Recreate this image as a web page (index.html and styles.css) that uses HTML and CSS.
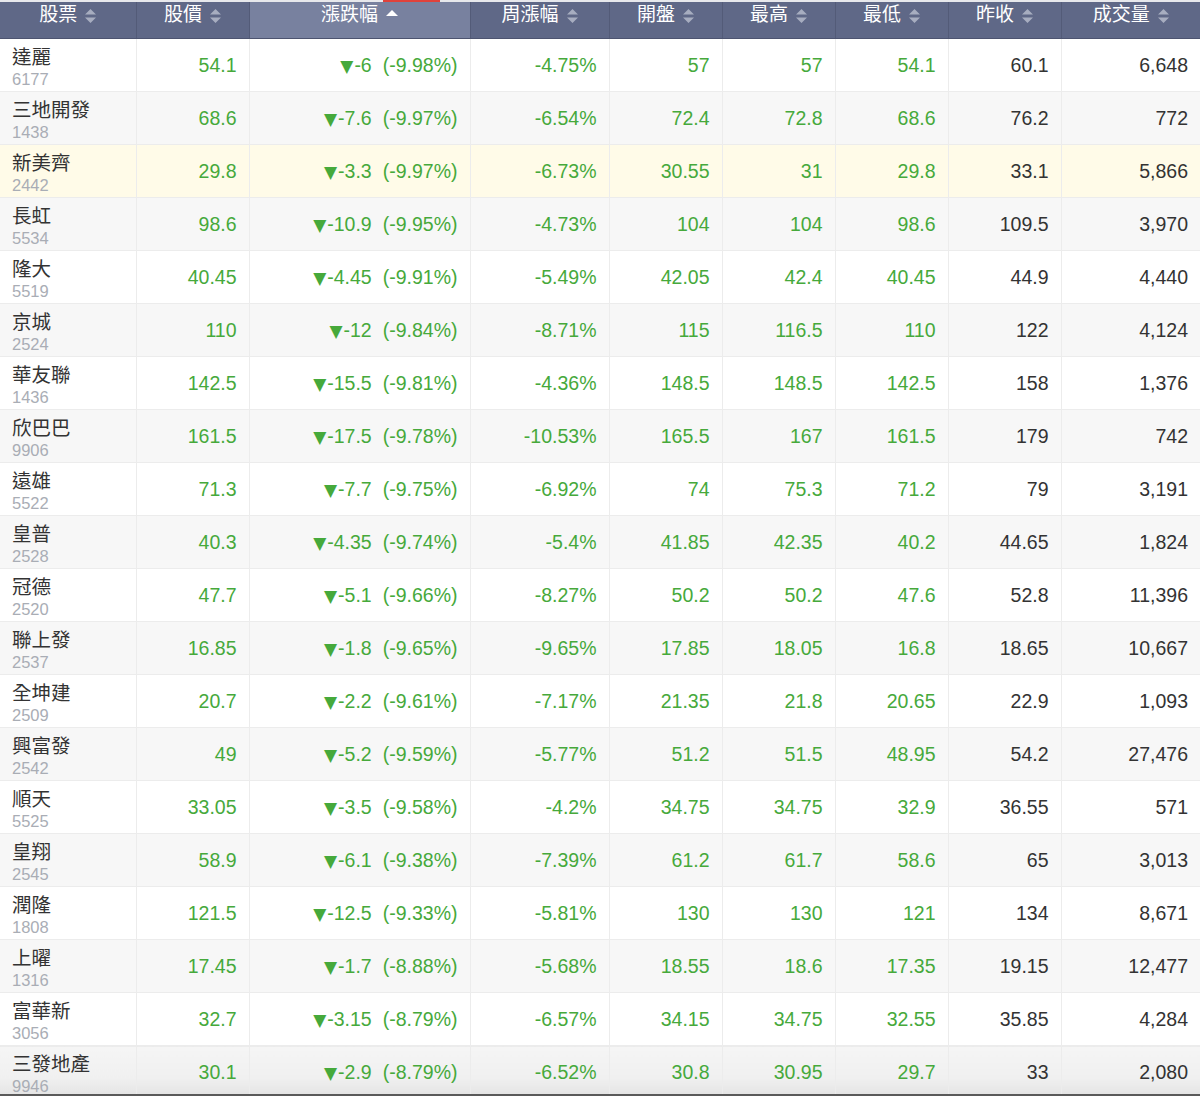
FILE: index.html
```html
<!DOCTYPE html>
<html lang="zh-Hant">
<head>
<meta charset="utf-8">
<title>股票</title>
<link rel="stylesheet" href="styles.css">
</head>
<body>
<div class="topstrip"><div class="tab"></div></div>
<table class="grid">
<colgroup>
<col class="c1"><col class="c2"><col class="c3"><col class="c4"><col class="c5"><col class="c6"><col class="c7"><col class="c8"><col class="c9">
</colgroup>
<thead>
<tr>
<th><span class="hd">股票<svg class="sort" viewBox="0 0 11 14"><path d="M5.5 0L11 5.5H0Z M0 8.5H11L5.5 14Z"/></svg></span></th>
<th><span class="hd">股價<svg class="sort" viewBox="0 0 11 14"><path d="M5.5 0L11 5.5H0Z M0 8.5H11L5.5 14Z"/></svg></span></th>
<th class="active"><span class="hd">漲跌幅<svg class="asc" viewBox="0 0 12 6"><path d="M6 0L12 6H0Z"/></svg></span></th>
<th><span class="hd">周漲幅<svg class="sort" viewBox="0 0 11 14"><path d="M5.5 0L11 5.5H0Z M0 8.5H11L5.5 14Z"/></svg></span></th>
<th><span class="hd">開盤<svg class="sort" viewBox="0 0 11 14"><path d="M5.5 0L11 5.5H0Z M0 8.5H11L5.5 14Z"/></svg></span></th>
<th><span class="hd">最高<svg class="sort" viewBox="0 0 11 14"><path d="M5.5 0L11 5.5H0Z M0 8.5H11L5.5 14Z"/></svg></span></th>
<th><span class="hd">最低<svg class="sort" viewBox="0 0 11 14"><path d="M5.5 0L11 5.5H0Z M0 8.5H11L5.5 14Z"/></svg></span></th>
<th><span class="hd">昨收<svg class="sort" viewBox="0 0 11 14"><path d="M5.5 0L11 5.5H0Z M0 8.5H11L5.5 14Z"/></svg></span></th>
<th><span class="hd">成交量<svg class="sort" viewBox="0 0 11 14"><path d="M5.5 0L11 5.5H0Z M0 8.5H11L5.5 14Z"/></svg></span></th>
</tr>
</thead>
<tbody>
<tr><td class="name"><div class="nm">達麗</div><div class="cd">6177</div></td><td class="g">54.1</td><td class="g"><span class="dn">▼</span>-6<span class="pct">(-9.98%)</span></td><td class="g">-4.75%</td><td class="g">57</td><td class="g">57</td><td class="g">54.1</td><td>60.1</td><td>6,648</td></tr>
<tr><td class="name"><div class="nm">三地開發</div><div class="cd">1438</div></td><td class="g">68.6</td><td class="g"><span class="dn">▼</span>-7.6<span class="pct">(-9.97%)</span></td><td class="g">-6.54%</td><td class="g">72.4</td><td class="g">72.8</td><td class="g">68.6</td><td>76.2</td><td>772</td></tr>
<tr class="hl"><td class="name"><div class="nm">新美齊</div><div class="cd">2442</div></td><td class="g">29.8</td><td class="g"><span class="dn">▼</span>-3.3<span class="pct">(-9.97%)</span></td><td class="g">-6.73%</td><td class="g">30.55</td><td class="g">31</td><td class="g">29.8</td><td>33.1</td><td>5,866</td></tr>
<tr><td class="name"><div class="nm">長虹</div><div class="cd">5534</div></td><td class="g">98.6</td><td class="g"><span class="dn">▼</span>-10.9<span class="pct">(-9.95%)</span></td><td class="g">-4.73%</td><td class="g">104</td><td class="g">104</td><td class="g">98.6</td><td>109.5</td><td>3,970</td></tr>
<tr><td class="name"><div class="nm">隆大</div><div class="cd">5519</div></td><td class="g">40.45</td><td class="g"><span class="dn">▼</span>-4.45<span class="pct">(-9.91%)</span></td><td class="g">-5.49%</td><td class="g">42.05</td><td class="g">42.4</td><td class="g">40.45</td><td>44.9</td><td>4,440</td></tr>
<tr><td class="name"><div class="nm">京城</div><div class="cd">2524</div></td><td class="g">110</td><td class="g"><span class="dn">▼</span>-12<span class="pct">(-9.84%)</span></td><td class="g">-8.71%</td><td class="g">115</td><td class="g">116.5</td><td class="g">110</td><td>122</td><td>4,124</td></tr>
<tr><td class="name"><div class="nm">華友聯</div><div class="cd">1436</div></td><td class="g">142.5</td><td class="g"><span class="dn">▼</span>-15.5<span class="pct">(-9.81%)</span></td><td class="g">-4.36%</td><td class="g">148.5</td><td class="g">148.5</td><td class="g">142.5</td><td>158</td><td>1,376</td></tr>
<tr><td class="name"><div class="nm">欣巴巴</div><div class="cd">9906</div></td><td class="g">161.5</td><td class="g"><span class="dn">▼</span>-17.5<span class="pct">(-9.78%)</span></td><td class="g">-10.53%</td><td class="g">165.5</td><td class="g">167</td><td class="g">161.5</td><td>179</td><td>742</td></tr>
<tr><td class="name"><div class="nm">遠雄</div><div class="cd">5522</div></td><td class="g">71.3</td><td class="g"><span class="dn">▼</span>-7.7<span class="pct">(-9.75%)</span></td><td class="g">-6.92%</td><td class="g">74</td><td class="g">75.3</td><td class="g">71.2</td><td>79</td><td>3,191</td></tr>
<tr><td class="name"><div class="nm">皇普</div><div class="cd">2528</div></td><td class="g">40.3</td><td class="g"><span class="dn">▼</span>-4.35<span class="pct">(-9.74%)</span></td><td class="g">-5.4%</td><td class="g">41.85</td><td class="g">42.35</td><td class="g">40.2</td><td>44.65</td><td>1,824</td></tr>
<tr><td class="name"><div class="nm">冠德</div><div class="cd">2520</div></td><td class="g">47.7</td><td class="g"><span class="dn">▼</span>-5.1<span class="pct">(-9.66%)</span></td><td class="g">-8.27%</td><td class="g">50.2</td><td class="g">50.2</td><td class="g">47.6</td><td>52.8</td><td>11,396</td></tr>
<tr><td class="name"><div class="nm">聯上發</div><div class="cd">2537</div></td><td class="g">16.85</td><td class="g"><span class="dn">▼</span>-1.8<span class="pct">(-9.65%)</span></td><td class="g">-9.65%</td><td class="g">17.85</td><td class="g">18.05</td><td class="g">16.8</td><td>18.65</td><td>10,667</td></tr>
<tr><td class="name"><div class="nm">全坤建</div><div class="cd">2509</div></td><td class="g">20.7</td><td class="g"><span class="dn">▼</span>-2.2<span class="pct">(-9.61%)</span></td><td class="g">-7.17%</td><td class="g">21.35</td><td class="g">21.8</td><td class="g">20.65</td><td>22.9</td><td>1,093</td></tr>
<tr><td class="name"><div class="nm">興富發</div><div class="cd">2542</div></td><td class="g">49</td><td class="g"><span class="dn">▼</span>-5.2<span class="pct">(-9.59%)</span></td><td class="g">-5.77%</td><td class="g">51.2</td><td class="g">51.5</td><td class="g">48.95</td><td>54.2</td><td>27,476</td></tr>
<tr><td class="name"><div class="nm">順天</div><div class="cd">5525</div></td><td class="g">33.05</td><td class="g"><span class="dn">▼</span>-3.5<span class="pct">(-9.58%)</span></td><td class="g">-4.2%</td><td class="g">34.75</td><td class="g">34.75</td><td class="g">32.9</td><td>36.55</td><td>571</td></tr>
<tr><td class="name"><div class="nm">皇翔</div><div class="cd">2545</div></td><td class="g">58.9</td><td class="g"><span class="dn">▼</span>-6.1<span class="pct">(-9.38%)</span></td><td class="g">-7.39%</td><td class="g">61.2</td><td class="g">61.7</td><td class="g">58.6</td><td>65</td><td>3,013</td></tr>
<tr><td class="name"><div class="nm">潤隆</div><div class="cd">1808</div></td><td class="g">121.5</td><td class="g"><span class="dn">▼</span>-12.5<span class="pct">(-9.33%)</span></td><td class="g">-5.81%</td><td class="g">130</td><td class="g">130</td><td class="g">121</td><td>134</td><td>8,671</td></tr>
<tr><td class="name"><div class="nm">上曜</div><div class="cd">1316</div></td><td class="g">17.45</td><td class="g"><span class="dn">▼</span>-1.7<span class="pct">(-8.88%)</span></td><td class="g">-5.68%</td><td class="g">18.55</td><td class="g">18.6</td><td class="g">17.35</td><td>19.15</td><td>12,477</td></tr>
<tr><td class="name"><div class="nm">富華新</div><div class="cd">3056</div></td><td class="g">32.7</td><td class="g"><span class="dn">▼</span>-3.15<span class="pct">(-8.79%)</span></td><td class="g">-6.57%</td><td class="g">34.15</td><td class="g">34.75</td><td class="g">32.55</td><td>35.85</td><td>4,284</td></tr>
<tr class="last"><td class="name"><div class="nm">三發地產</div><div class="cd">9946</div></td><td class="g">30.1</td><td class="g"><span class="dn">▼</span>-2.9<span class="pct">(-8.79%)</span></td><td class="g">-6.52%</td><td class="g">30.8</td><td class="g">30.95</td><td class="g">29.7</td><td>33</td><td>2,080</td></tr>
</tbody>
</table>
<div class="edge"></div>
</body>
</html>
```

FILE: styles.css
```css
html, body {
  margin: 0;
  padding: 0;
  background: #ffffff;
  overflow: hidden;
}
body {
  font-family: "Liberation Sans", "Noto Sans CJK TC", sans-serif;
  color: #333333;
  width: 1200px;
  height: 1096px;
}
.topstrip {
  height: 2px;
  background: #e7e8ec;
  padding-left: 383px;
}
.tab {
  width: 57px;
  height: 2px;
  background: #e0423b;
}
.grid {
  width: 1200px;
  table-layout: fixed;
  border-collapse: collapse;
  border-spacing: 0;
}
.c1 { width: 136px; }
.c2 { width: 113px; }
.c3 { width: 221px; }
.c4 { width: 139px; }
.c5 { width: 113px; }
.c6 { width: 113px; }
.c7 { width: 113px; }
.c8 { width: 113px; }
.c9 { width: 139px; }

thead th {
  height: 36px;
  padding: 0;
  background: #5f6887;
  color: #ffffff;
  font-weight: normal;
  font-size: 19px;
  text-align: center;
  border-right: 1px solid #535b78;
  border-bottom: 1px solid #4d5470;
}
thead th:last-child { border-right: none; }
thead th.active { background: #78819f; }
.hd {
  display: inline-flex;
  align-items: center;
  gap: 8px;
  line-height: 24px;
  position: relative;
  top: -5px;
}
.sort {
  width: 11px;
  height: 14px;
  fill: #a7adc0;
  margin-top: 2px;
}
.asc {
  width: 12px;
  height: 6px;
  fill: #ffffff;
  margin-top: -4px;
}

tbody td {
  height: 52px;
  padding: 1px 12px 0 0;
  font-size: 19.5px;
  text-align: right;
  vertical-align: middle;
  color: #333333;
  border-right: 1px solid #ececec;
  border-bottom: 1px solid #ececec;
  white-space: nowrap;
  box-sizing: border-box;
}
tbody td:last-child { border-right: none; }
tbody tr { height: 53px; }
tbody tr:nth-child(even) td { background: #f7f7f7; }
tbody tr.hl td { background: #fffbe8; }
tbody tr.last td { background: linear-gradient(#f5f5f5, #f0f0f0 60%, #e2e2e2); }
tbody td.g { color: #46a93b; }
tbody td.name {
  text-align: left;
  vertical-align: top;
  padding: 7px 0 0 12px;
}
.nm {
  font-size: 19.5px;
  line-height: 23px;
  color: #333333;
}
.cd {
  font-size: 16.5px;
  line-height: 20px;
  color: #a9adb5;
}
.dn {
  font-family: "DejaVu Sans", sans-serif;
  font-size: 17px;
  margin-right: 1px;
}
.pct { margin-left: 11px; }
.edge {
  position: fixed;
  left: 0;
  right: 0;
  bottom: 0;
  height: 2px;
  background: #5a5a5a;
}
```
